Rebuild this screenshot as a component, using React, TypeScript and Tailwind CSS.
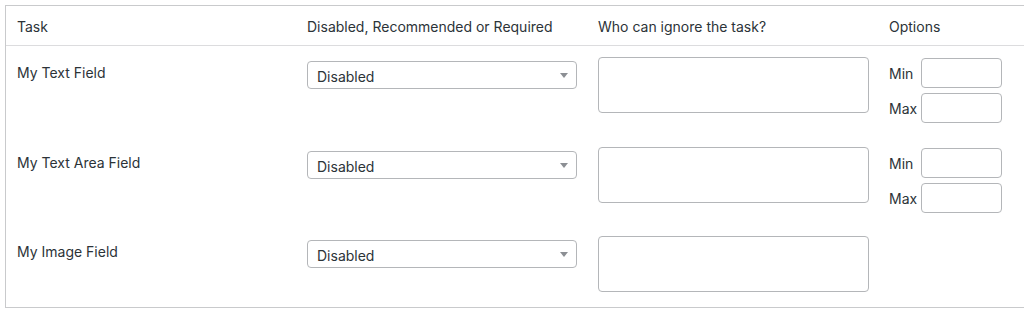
import React from "react";

const rows = [
  { name: "My Text Field", minMax: true, h: "h-[90px]" },
  { name: "My Text Area Field", minMax: true, h: "h-[89px]" },
  { name: "My Image Field", minMax: false, h: "pb-[15px]" },
];

function SelectBox() {
  return (
    <div className="mt-[4px] flex h-[28px] w-[270px] items-center justify-between rounded-[4px] border border-[#b4b6b9] bg-white pl-[9px] pr-[8px] text-[14px] text-[#2c3338]">
      <span className="pt-[3px]">Disabled</span>
      <svg width="8" height="5" viewBox="0 0 8 5" className="mt-[1px]">
        <path d="M0 0 L8 0 L4 5 Z" fill="#8c8f94" />
      </svg>
    </div>
  );
}

function MinMax() {
  return (
    <div className="flex flex-col gap-[5px] pt-[1px]">
      {["Min", "Max"].map((l) => (
        <div key={l} className="flex items-center">
          <span className="w-[32px] text-[14px] text-[#2c3338]">{l}</span>
          <div className="h-[30px] w-[81px] rounded-[4px] border border-[#b4b6b9] bg-white" />
        </div>
      ))}
    </div>
  );
}

export default function App() {
  return (
    <div className="h-[315px] w-full overflow-hidden bg-white pl-[5px] pt-[5px] font-['Inter','Liberation_Sans',Arial,sans-serif]">
      <div className="w-[1060px] border border-[#c9cacc]">
        <div className="grid h-[40px] grid-cols-[290px_291px_291px_1fr] border-b border-[#dcdcde] pt-[11px] text-[14px] leading-[20px] text-[#2c3338]">
          <div className="pl-[11px]">Task</div>
          <div className="pl-[11px]">Disabled, Recommended or Required</div>
          <div className="pl-[11px]">Who can ignore the task?</div>
          <div className="pl-[11px]">Options</div>
        </div>
        {rows.map((r) => (
          <div
            key={r.name}
            className={`grid grid-cols-[290px_291px_291px_1fr] pt-[11px] ${r.h}`}
          >
            <div className="pl-[11px] pt-[6px] text-[14px] leading-[20px] text-[#2c3338]">
              {r.name}
            </div>
            <div className="pl-[11px]">
              <SelectBox />
            </div>
            <div className="pl-[11px]">
              <div className="h-[56px] w-[271px] rounded-[4px] border border-[#b4b6b9] bg-white" />
            </div>
            <div className="pl-[11px]">{r.minMax && <MinMax />}</div>
          </div>
        ))}
      </div>
    </div>
  );
}
